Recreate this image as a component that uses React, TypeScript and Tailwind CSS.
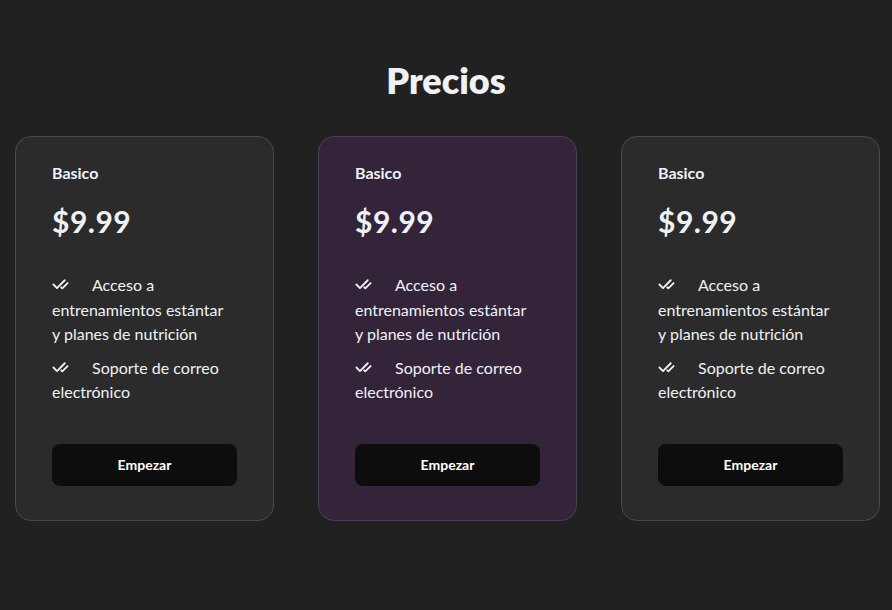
import { CheckCheck } from 'lucide-react';

const PLANS = [
  { id: 'a', name: 'Basico', price: '$9.99', highlight: false },
  { id: 'b', name: 'Basico', price: '$9.99', highlight: true },
  { id: 'c', name: 'Basico', price: '$9.99', highlight: false },
];

const FEATURES = [
  'Acceso a entrenamientos estántar y planes de nutrición',
  'Soporte de correo electrónico',
];

function PlanCard({ name, price, highlight }: { name: string; price: string; highlight: boolean }) {
  return (
    <div
      className={
        highlight
          ? 'flex flex-col rounded-[16px] border border-[#4d3f55] bg-[#33243a] px-[36px] pb-[34px] pt-[24px]'
          : 'flex flex-col rounded-[16px] border border-[#4a4a4a] bg-[#2b2b2b] px-[36px] pb-[34px] pt-[24px]'
      }
    >
      <h3 className="text-[16px] font-bold leading-[24px]">{name}</h3>
      <div className="mt-[18px] text-[30px] font-bold leading-[36px] tracking-[0.5px]">{price}</div>
      <ul className="mt-[34px] flex flex-col gap-[9px] pr-[8px] text-[16px] leading-[24.5px]">
        {FEATURES.map((f) => (
          <li key={f}>
            <CheckCheck className="mr-[23px] inline-block size-[17px] -translate-y-[2px] align-middle" strokeWidth={2.6} />
            {f}
          </li>
        ))}
      </ul>
      <button
        type="button"
        className="mt-[39px] h-[42px] w-full rounded-[8px] bg-[#0d0d0d] text-[14px] font-bold text-white"
      >
        Empezar
      </button>
    </div>
  );
}

export default function App() {
  return (
    <div className="min-h-[610px] bg-[#212121] px-[15px] pt-[60px] text-[#eef2f7] [font-family:Lato,'Noto_Sans',sans-serif]">
      <h1 className="text-center text-[36px] font-extrabold leading-[40px]">Precios</h1>
      <div className="mt-[36px] grid grid-cols-[259px_259px_259px] gap-[44px]">
        {PLANS.map((p) => (
          <PlanCard key={p.id} name={p.name} price={p.price} highlight={p.highlight} />
        ))}
      </div>
    </div>
  );
}
